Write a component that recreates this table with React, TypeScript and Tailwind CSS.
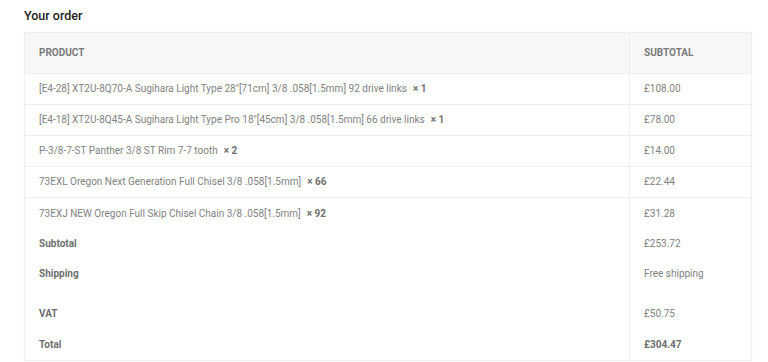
import React from "react";

const items = [
  { name: '[E4-28] XT2U-8Q70-A Sugihara Light Type 28"[71cm] 3/8 .058[1.5mm] 92 drive links', qty: "1", price: "£108.00" },
  { name: '[E4-18] XT2U-8Q45-A Sugihara Light Type Pro 18"[45cm] 3/8 .058[1.5mm] 66 drive links', qty: "1", price: "£78.00" },
  { name: "P-3/8-7-ST Panther 3/8 ST Rim 7-7 tooth", qty: "2", price: "£14.00" },
  { name: "73EXL Oregon Next Generation Full Chisel 3/8 .058[1.5mm]", qty: "66", price: "£22.44" },
  { name: "73EXJ NEW Oregon Full Skip Chisel Chain 3/8 .058[1.5mm]", qty: "92", price: "£31.28" },
];

export default function App() {
  return (
    <div className="w-[768px] h-[362px] bg-white overflow-hidden" style={{ fontFamily: "Roboto, 'Liberation Sans', sans-serif" }}>
      <div className="pl-[24px] pr-[16px]">
        <h3 className="pt-[8px] h-[32px] text-[12.5px] font-medium text-[#222] leading-[16px]">Your order</h3>
        <div className="border border-[#eeeeee] text-[10px] text-[#828282] leading-[14px] shadow-[0_0_2px_rgba(0,0,0,0.03)]">
          <div className="flex h-[41px] bg-[#f7f7f7] border-b border-[#eeeeee] font-bold text-[10px] text-[#7a7a7a]">
            <div className="flex-1 flex items-center pl-[14px]">PRODUCT</div>
            <div className="w-[122px] flex items-center pl-[14px] border-l border-[#eeeeee]">SUBTOTAL</div>
          </div>
          {items.map((it, i) => (
            <div key={i} className={`flex h-[31px] ${i < items.length - 1 ? "border-b border-[#eeeeee]" : ""}`}>
              <div className="flex-1 flex items-center pl-[14px]">
                {it.name}
                <strong className="ml-[6px] font-bold text-[#6e6e6e]">× {it.qty}</strong>
              </div>
              <div className="w-[122px] flex items-center pl-[14px] border-l border-[#f2f2f2]">{it.price}</div>
            </div>
          ))}
          <div className="flex h-[30px]">
            <div className="flex-1 flex items-center pl-[14px] font-bold text-[#6e6e6e]">Subtotal</div>
            <div className="w-[122px] flex items-center pl-[14px] border-l border-[#f2f2f2]">£253.72</div>
          </div>
          <div className="flex h-[40px]">
            <div className="flex-1 pl-[14px] pt-[8px] font-bold text-[#6e6e6e]">Shipping</div>
            <div className="w-[122px] pl-[14px] pt-[8px] border-l border-[#f2f2f2]">Free shipping</div>
          </div>
          <div className="flex h-[30px]">
            <div className="flex-1 flex items-center pl-[14px] font-bold text-[#6e6e6e]">VAT</div>
            <div className="w-[122px] flex items-center pl-[14px] border-l border-[#f2f2f2]">£50.75</div>
          </div>
          <div className="flex h-[31px]">
            <div className="flex-1 flex items-center pl-[14px] font-bold text-[#6e6e6e]">Total</div>
            <div className="w-[122px] flex items-center pl-[14px] border-l border-[#f2f2f2] font-bold text-[#6e6e6e]">£304.47</div>
          </div>
        </div>
      </div>
    </div>
  );
}
